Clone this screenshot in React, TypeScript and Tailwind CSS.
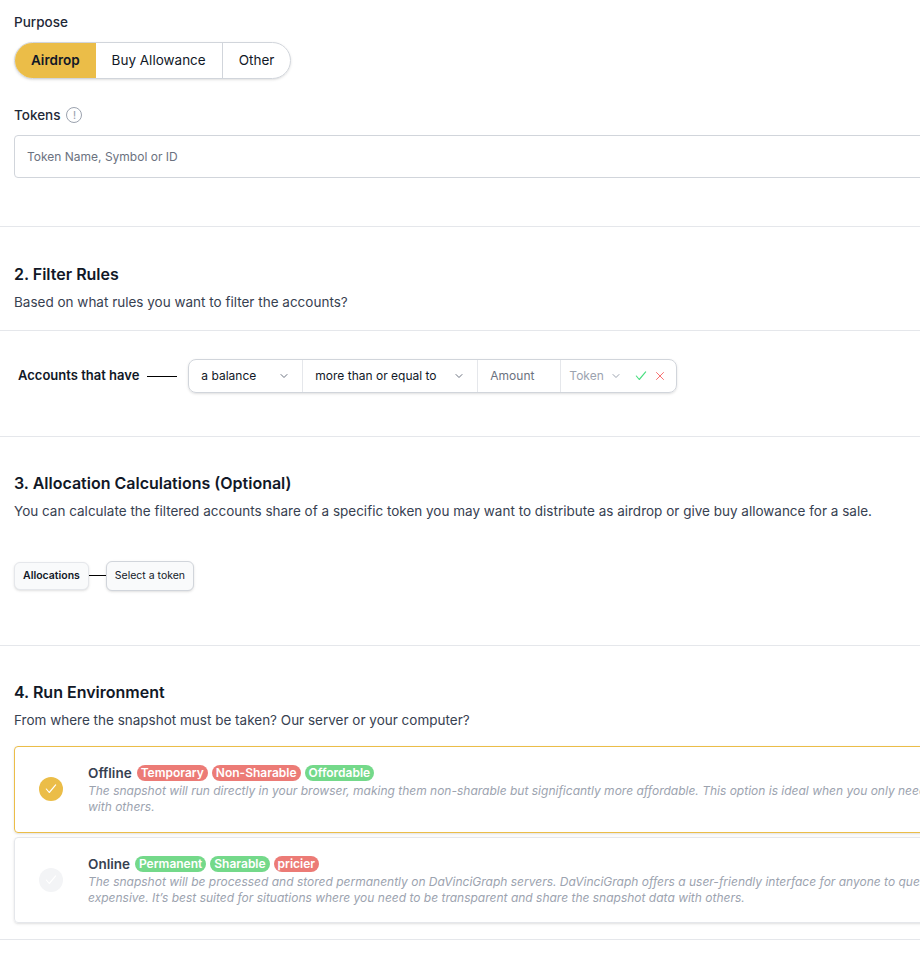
import React from "react";

const Chev = ({ c = "#6b7280" }: { c?: string }) => (
  <svg width="12" height="12" viewBox="0 0 24 24" fill="none" stroke={c} strokeWidth="2" strokeLinecap="round" strokeLinejoin="round"><path d="M6 9l6 6 6-6" /></svg>
);

const Check = ({ c }: { c: string }) => (
  <svg width="14" height="14" viewBox="0 0 24 24" fill="none" stroke={c} strokeWidth="2" strokeLinecap="round" strokeLinejoin="round"><path d="M4 12l5 6L20 5" /></svg>
);

const Badge = ({ t, green }: { t: string; green?: boolean }) => (
  <span className={`rounded-full px-[4px] text-[12px] font-semibold leading-[16px] text-white ${green ? "bg-[#74d98a]" : "bg-[#ec7b76]"}`}>{t}</span>
);

export default function App() {
  return (
    <div className="w-[920px] h-[953px] overflow-hidden bg-white text-[#111827]" style={{ fontFamily: "Inter, 'Noto Sans', sans-serif" }}>
      <div className="w-[1100px] pl-[14px]">
        <div className="pt-[12px] text-[13.5px] leading-[20px] font-medium text-[#1f2937]">Purpose</div>
        <div className="mt-[10px] inline-flex h-[37px] rounded-full border border-[#d1d5db] shadow-sm overflow-hidden text-[13.5px]">
          <div className="flex items-center bg-[#ebbd48] px-[16px] font-semibold">Airdrop</div>
          <div className="flex items-center px-[16px] border-r border-[#d1d5db]">Buy Allowance</div>
          <div className="flex items-center px-[16px]">Other</div>
        </div>
        <div className="mt-[26px] flex items-center gap-[6px] text-[13.5px] leading-[20px] font-medium text-[#1f2937]">
          Tokens
          <span className="flex h-[16px] w-[16px] items-center justify-center rounded-full border border-[#9ca3af] text-[10px] text-[#9ca3af]">!</span>
        </div>
        <div className="mt-[10px] flex h-[43px] items-center rounded-[4px] border border-[#d1d5db] px-[12px] text-[12px] text-[#6b7280]">Token Name, Symbol or ID</div>
      </div>
      <div className="mt-[48px] border-t border-[#e5e7eb]" />
      <div className="pl-[14px]">
        <div className="mt-[35px] text-[16px] leading-[24px] font-semibold text-[#111827]">2. Filter Rules</div>
        <div className="mt-[6px] text-[13.5px] leading-[20px] text-[#374151]">Based on what rules you want to filter the accounts?</div>
      </div>
      <div className="mt-[18px] border-t border-[#e5e7eb]" />
      <div className="mt-[28px] flex items-center pl-[18px]">
        <span className="text-[13px] font-semibold">Accounts that have</span>
        <span className="mx-[8px] w-[30px] border-t border-black" />
        <div className="ml-[3px] flex h-[34px] items-center rounded-[8px] border border-[#d1d5db] shadow-sm text-[12px]">
          <div className="flex w-[114px] items-center justify-between border-r border-[#e5e7eb] h-full px-[12px]">a balance <Chev /></div>
          <div className="flex w-[175px] items-center justify-between border-r border-[#e5e7eb] h-full px-[12px]">more than or equal to <Chev /></div>
          <div className="flex w-[83px] items-center border-r border-[#e5e7eb] h-full px-[12px] text-[#6b7280]">Amount</div>
          <div className="flex items-center gap-[6px] h-full pl-[8px] pr-[10px] text-[#9ca3af]">Token <Chev c="#9ca3af" /><span className="ml-[6px]"><Check c="#4ade80" /></span>
            <svg width="12" height="12" viewBox="0 0 24 24" fill="none" stroke="#f87171" strokeWidth="2" strokeLinecap="round"><path d="M5 5l14 14M19 5L5 19" /></svg>
          </div>
        </div>
      </div>
      <div className="mt-[43px] border-t border-[#e5e7eb]" />
      <div className="pl-[14px]">
        <div className="mt-[34px] text-[16px] leading-[24px] font-semibold">3. Allocation Calculations (Optional)</div>
        <div className="mt-[6px] text-[13.5px] leading-[20px] text-[#374151]">You can calculate the filtered accounts share of a specific token you may want to distribute as airdrop or give buy allowance for a sale.</div>
        <div className="mt-[40px] flex items-center">
          <div className="rounded-[6px] border border-[#e5e7eb] bg-[#f9fafb] px-[8px] py-[5px] text-[10.5px] font-semibold shadow-sm">Allocations</div>
          <span className="w-[17px] border-t border-black" />
          <div className="rounded-[6px] border border-[#d1d5db] bg-[#f9fafb] px-[8px] py-[6px] text-[10.5px] shadow-sm">Select a token</div>
        </div>
      </div>
      <div className="mt-[54px] border-t border-[#e5e7eb]" />
      <div className="w-[1100px] pl-[14px]">
        <div className="mt-[34px] text-[16px] leading-[24px] font-semibold">4. Run Environment</div>
        <div className="mt-[6px] text-[13.5px] leading-[20px] text-[#374151]">From where the snapshot must be taken? Our server or your computer?</div>
        <div className="mt-[16px] flex h-[87px] items-center rounded-[4px] border border-[#ebbd48] shadow-sm">
          <div className="ml-[24px] mr-[25px] flex h-[24px] w-[24px] shrink-0 items-center justify-center rounded-full bg-[#ebbd48]"><Check c="#ffffff" /></div>
          <div>
            <div className="flex items-center gap-[4px]"><span className="mr-[1px] text-[13.5px] font-semibold text-[#374151]">Offline</span><Badge t="Temporary" /><Badge t="Non-Sharable" /><Badge t="Offordable" green /></div>
            <div className="w-[880px] text-[12px] italic leading-[16px] text-[#9ca3af]">The snapshot will run directly in your browser, making them non-sharable but significantly more affordable. This option is ideal when you only need results with others.</div>
          </div>
        </div>
        <div className="mt-[4px] flex h-[86px] items-center rounded-[4px] border border-[#e5e7eb] shadow-sm">
          <div className="ml-[24px] mr-[25px] flex h-[24px] w-[24px] shrink-0 items-center justify-center rounded-full bg-[#f3f4f6]"><Check c="#ffffff" /></div>
          <div>
            <div className="flex items-center gap-[4px]"><span className="mr-[1px] text-[13.5px] font-semibold text-[#374151]">Online</span><Badge t="Permanent" green /><Badge t="Sharable" green /><Badge t="pricier" /></div>
            <div className="w-[880px] text-[12px] italic leading-[16px] text-[#9ca3af]">The snapshot will be processed and stored permanently on DaVinciGraph servers. DaVinciGraph offers a user-friendly interface for anyone to query expensive. It’s best suited for situations where you need to be transparent and share the snapshot data with others.</div>
          </div>
        </div>
      </div>
      <div className="mt-[16px] border-t border-[#e5e7eb]" />
    </div>
  );
}
